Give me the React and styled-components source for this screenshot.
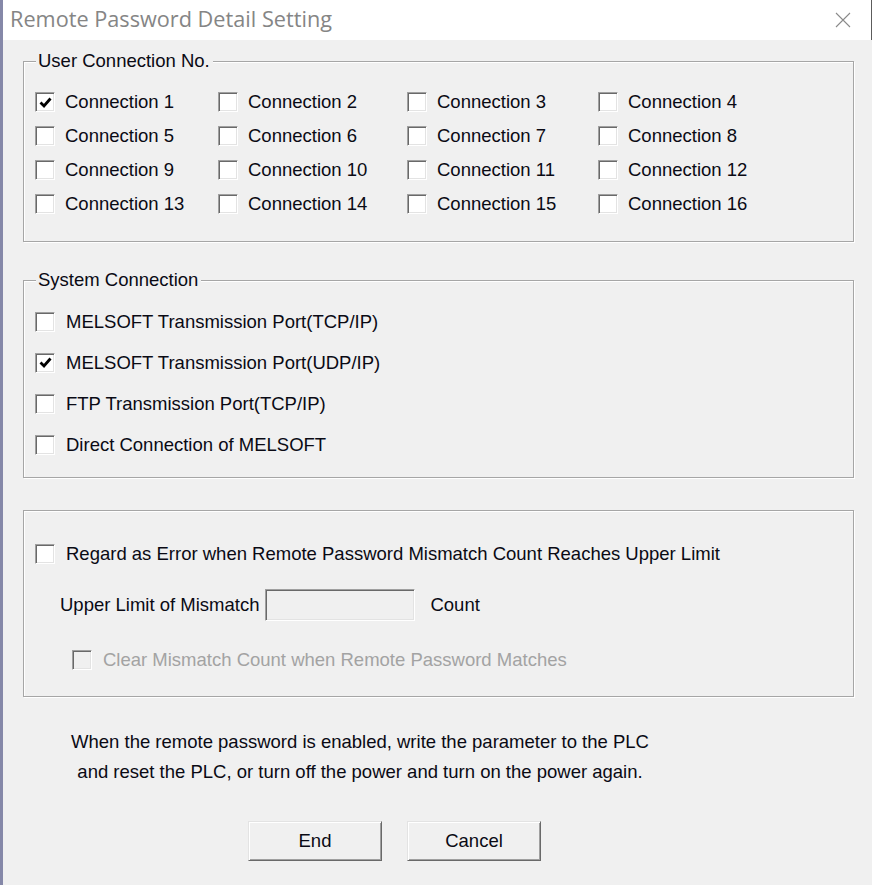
import React from 'react'
import styled, { createGlobalStyle } from 'styled-components'

const GlobalStyle = createGlobalStyle`
  body {
    margin: 0;
    background: #f0f0f0;
    font-family: "Liberation Sans", Arial, sans-serif;
  }
`

const Window = styled.div`
  width: 872px;
  height: 885px;
  box-sizing: border-box;
  border-left: 3px solid #8588a8;
  background: #f0f0f0;
  display: flex;
  flex-direction: column;
  color: #0a0a14;
  font-size: 18.5px;
`

const TitleBar = styled.div`
  height: 40px;
  flex: none;
  background: #fff;
  border-right: 1px solid #5c5c5c;
  display: flex;
  align-items: center;
  justify-content: space-between;
  padding: 0 20px 0 7px;
`

const Title = styled.div`
  font-family: "Open Sans", "Noto Sans", sans-serif;
  font-size: 21.7px;
  color: #858585;
  padding-bottom: 3px;
`

const Body = styled.div`
  padding: 0 18px 0 20px;
  display: flex;
  flex-direction: column;
`

const Group = styled.fieldset`
  margin: ${p => p.$top}px 0 0 0;
  padding: 0;
  border: 1px solid #a6a6a6;
  box-shadow: 1px 1px 0 #fff, inset 1px 1px 0 #fff;
  min-width: 0;
`

const Legend = styled.legend`
  margin-left: 12px;
  padding: 0 3px 0 2px;
  line-height: 20px;
  background: #f0f0f0;
`

const ConnGrid = styled.div`
  display: grid;
  grid-template-columns: 183px 189px 191px 1fr;
  grid-auto-rows: 34px;
  padding: 14px 0 20px 11px;
`

const SysList = styled.div`
  display: grid;
  grid-auto-rows: 41px;
  padding: 11px 0 12px 11px;
`

const ErrorBox = styled.div`
  display: flex;
  flex-direction: column;
  padding: 26px 0 19px 11px;
`

const Row = styled.div`
  height: 34px;
  display: flex;
  align-items: center;
  margin-top: ${p => p.$top || 0}px;
  padding-left: ${p => p.$indent || 0}px;
`

const Check = styled.label`
  display: flex;
  align-items: center;
  gap: ${p => p.$gap || 10}px;
  color: ${p => (p.$disabled ? '#a3a3a3' : 'inherit')};
  white-space: nowrap;
`

const Box = styled.span`
  width: 20px;
  height: 20px;
  box-sizing: border-box;
  flex: none;
  border: 1px solid;
  border-color: #a0a0a0 #fff #fff #a0a0a0;
  box-shadow: inset 1px 1px 0 #696969, inset -1px -1px 0 #e3e3e3;
  background: ${p => (p.$disabled ? '#f0f0f0' : '#fff')};
  display: flex;
  align-items: center;
  justify-content: center;
`

const Field = styled.div`
  width: 150px;
  height: 32px;
  box-sizing: border-box;
  margin: 0 15px 0 6px;
  border: 1px solid;
  border-color: #a0a0a0 #fff #fff #a0a0a0;
  box-shadow: inset 1px 1px 0 #696969, inset -1px -1px 0 #e3e3e3;
  background: #f0f0f0;
`

const Note = styled.div`
  margin: 30px 0 0 37px;
  width: 600px;
  text-align: center;
  line-height: 30px;
`

const Buttons = styled.div`
  display: flex;
  gap: 25px;
  margin-top: 34px;
  padding-left: 225px;
`

const Button = styled.button`
  width: 134px;
  height: 40px;
  box-sizing: border-box;
  font: inherit;
  color: inherit;
  background: #f0f0f0;
  border: 1px solid;
  border-color: #e3e3e3 #696969 #696969 #e3e3e3;
  box-shadow: inset 1px 1px 0 #fff, inset -1px -1px 0 #a0a0a0;
  padding: 0;
`

const Tick = () => (
  <svg width="13" height="13" viewBox="0 0 13 13">
    <path d="M1.5 6.5 L5 10 L11.5 2.5" fill="none" stroke="#000" strokeWidth="2.8" />
  </svg>
)

const CheckBox = ({ checked, disabled, gap, children }) => (
  <Check $gap={gap} $disabled={disabled}>
    <Box $disabled={disabled}>{checked && <Tick />}</Box>
    <span>{children}</span>
  </Check>
)

const connections = Array.from({ length: 16 }, (_, i) => i + 1)

const systemPorts = [
  { label: 'MELSOFT Transmission Port(TCP/IP)', checked: false },
  { label: 'MELSOFT Transmission Port(UDP/IP)', checked: true },
  { label: 'FTP Transmission Port(TCP/IP)', checked: false },
  { label: 'Direct Connection of MELSOFT', checked: false },
]

const App = () => {
  return (
    <>
      <GlobalStyle />
      <Window>
        <TitleBar>
          <Title>Remote Password Detail Setting</Title>
          <svg width="16" height="16" viewBox="0 0 16 16">
            <path d="M1 1 L15 15 M15 1 L1 15" stroke="#8a8a8a" strokeWidth="1.1" />
          </svg>
        </TitleBar>
        <Body>
          <Group $top={11}>
            <Legend>User Connection No.</Legend>
            <ConnGrid>
              {connections.map(n => (
                <CheckBox key={n} checked={n === 1}>
                  Connection {n}
                </CheckBox>
              ))}
            </ConnGrid>
          </Group>

          <Group $top={28}>
            <Legend>System Connection</Legend>
            <SysList>
              {systemPorts.map(p => (
                <CheckBox key={p.label} checked={p.checked} gap={11}>
                  {p.label}
                </CheckBox>
              ))}
            </SysList>
          </Group>

          <Group $top={32}>
            <ErrorBox>
              <Row>
                <CheckBox gap={11}>
                  Regard as Error when Remote Password Mismatch Count Reaches Upper Limit
                </CheckBox>
              </Row>
              <Row $top={17} $indent={25}>
                <span>Upper Limit of Mismatch</span>
                <Field />
                <span>Count</span>
              </Row>
              <Row $top={21} $indent={37}>
                <CheckBox disabled gap={11}>
                  Clear Mismatch Count when Remote Password Matches
                </CheckBox>
              </Row>
            </ErrorBox>
          </Group>

          <Note>
            When the remote password is enabled, write the parameter to the PLC
            <br />
            and reset the PLC, or turn off the power and turn on the power again.
          </Note>

          <Buttons>
            <Button>End</Button>
            <Button>Cancel</Button>
          </Buttons>
        </Body>
      </Window>
    </>
  )
}

export default App
